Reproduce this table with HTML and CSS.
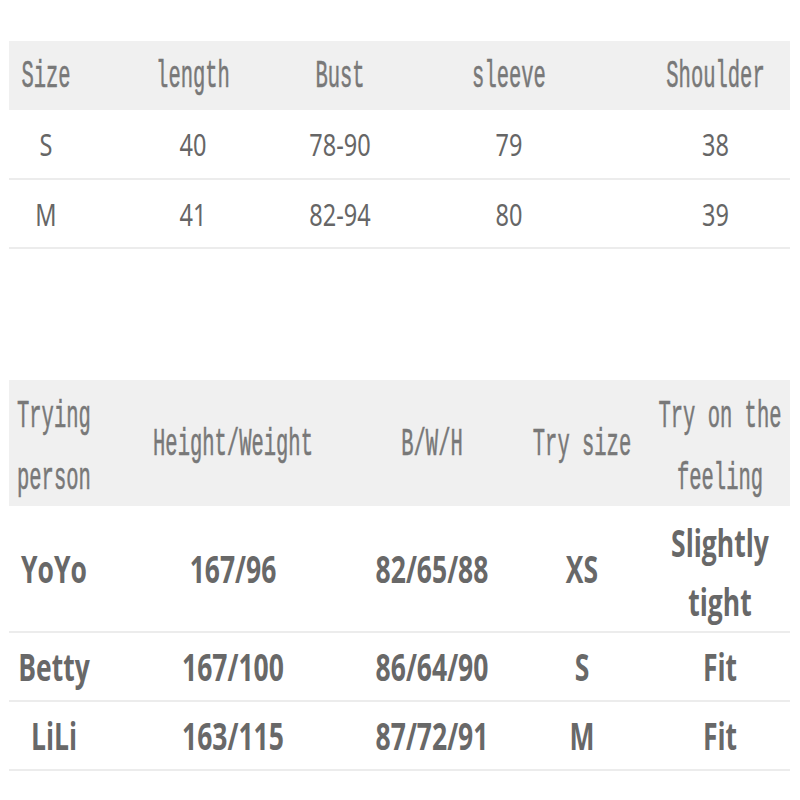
FILE: index.html
```html
<!DOCTYPE html>
<html lang="en">
<head>
<meta charset="utf-8">
<title>Size chart</title>
<link rel="stylesheet" href="styles.css">
</head>
<body>
<div class="page">
  <table class="chart chart-size">
    <colgroup>
      <col class="c1-1"><col class="c1-2"><col class="c1-3"><col class="c1-4"><col class="c1-5">
    </colgroup>
    <thead>
      <tr class="head-row">
        <th><span class="mono">Size</span></th>
        <th><span class="mono">length</span></th>
        <th><span class="mono">Bust</span></th>
        <th><span class="mono">sleeve</span></th>
        <th><span class="mono">Shoulder</span></th>
      </tr>
    </thead>
    <tbody>
      <tr class="body-row">
        <td><span class="num">S</span></td>
        <td><span class="num">40</span></td>
        <td><span class="num">78-90</span></td>
        <td><span class="num">79</span></td>
        <td><span class="num">38</span></td>
      </tr>
      <tr class="body-row">
        <td><span class="num">M</span></td>
        <td><span class="num">41</span></td>
        <td><span class="num">82-94</span></td>
        <td><span class="num">80</span></td>
        <td><span class="num">39</span></td>
      </tr>
    </tbody>
  </table>

  <table class="chart chart-try">
    <colgroup>
      <col class="c2-1"><col class="c2-2"><col class="c2-3"><col class="c2-4"><col class="c2-5">
    </colgroup>
    <thead>
      <tr class="head-row tall">
        <th class="left"><span class="mono two">Trying<br>person</span></th>
        <th><span class="mono">Height/Weight</span></th>
        <th><span class="mono">B/W/H</span></th>
        <th><span class="mono">Try size</span></th>
        <th class="last"><span class="mono two">Try on the<br>feeling</span></th>
      </tr>
    </thead>
    <tbody>
      <tr class="body-row tall-row">
        <td><span class="bold">YoYo</span></td>
        <td><span class="bold">167/96</span></td>
        <td><span class="bold">82/65/88</span></td>
        <td><span class="bold">XS</span></td>
        <td class="last"><span class="bold two-bold">Slightly<br>tight</span></td>
      </tr>
      <tr class="body-row">
        <td><span class="bold">Betty</span></td>
        <td><span class="bold">167/100</span></td>
        <td><span class="bold">86/64/90</span></td>
        <td><span class="bold">S</span></td>
        <td class="last"><span class="bold">Fit</span></td>
      </tr>
      <tr class="body-row">
        <td><span class="bold">LiLi</span></td>
        <td><span class="bold">163/115</span></td>
        <td><span class="bold">87/72/91</span></td>
        <td><span class="bold">M</span></td>
        <td class="last"><span class="bold">Fit</span></td>
      </tr>
    </tbody>
  </table>
</div>
</body>
</html>
```

FILE: styles.css
```css
* { box-sizing: border-box; }

html, body {
  margin: 0;
  padding: 0;
  background: #ffffff;
}

.page {
  padding: 41px 10px 0 9px;
}

.chart {
  width: 781px;
  border-collapse: collapse;
  table-layout: fixed;
}

.chart-try {
  margin-top: 131px;
}

.c1-1 { width: 74px; }
.c1-2 { width: 220px; }
.c1-3 { width: 74px; }
.c1-4 { width: 264px; }
.c1-5 { width: 149px; }

.c2-1 { width: 90px; }
.c2-2 { width: 268px; }
.c2-3 { width: 130px; }
.c2-4 { width: 170px; }
.c2-5 { width: 123px; }

.chart th,
.chart td {
  padding: 0;
  text-align: center;
  vertical-align: middle;
  white-space: nowrap;
  overflow: visible;
  font-weight: 400;
}

.chart th.left {
  text-align: left;
  padding-left: 8px;
}

.chart .last {
  padding-right: 17px;
}

.chart .last > span {
  margin: 0 -20px;
}

.head-row {
  background: #f0f0f0;
  height: 69px;
}

.head-row.tall {
  height: 126px;
}

.body-row {
  height: 69px;
  border-bottom: 2px solid #ececec;
}

.body-row.tall-row {
  height: 126px;
}

.mono {
  display: inline-block;
  font-family: "Liberation Mono", "DejaVu Sans Mono", monospace;
  font-weight: 400;
  font-size: 20.5px;
  line-height: 20.5px;
  color: #787878;
  transform: translateY(3px) scaleY(1.88);
  -webkit-text-stroke: 0.3px #787878;
}

.mono.two {
  line-height: 32.5px;
  transform: translateY(5px) scaleY(1.88);
}

.num {
  display: inline-block;
  font-family: "Noto Sans", "Liberation Sans", sans-serif;
  font-size: 23.5px;
  line-height: 23.5px;
  color: #666666;
  transform: translateY(1px) scaleY(1.34);
}

.bold {
  display: inline-block;
  font-family: "Open Sans", "Noto Sans", sans-serif;
  font-weight: 700;
  font-size: 26.5px;
  line-height: 26.5px;
  color: #686868;
  transform: translateY(1px) scaleY(1.44);
}

.bold.two-bold {
  line-height: 40.5px;
  transform: translateY(4px) scaleY(1.44);
}
```
